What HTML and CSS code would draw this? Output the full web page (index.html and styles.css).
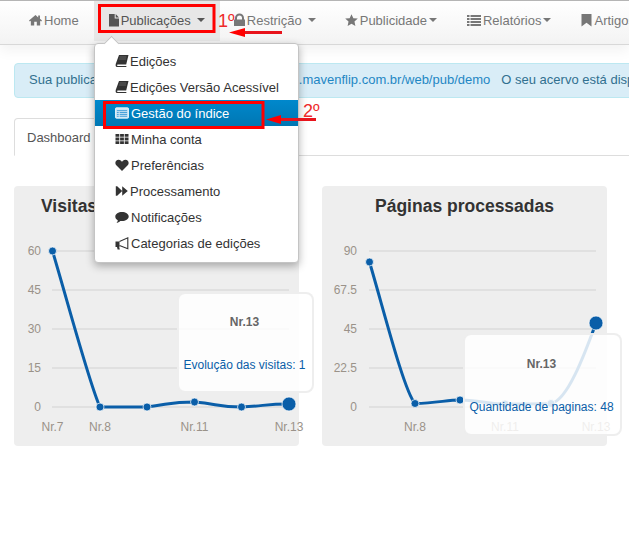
FILE: index.html
```html
<!DOCTYPE html>
<html lang="pt">
<head>
<meta charset="utf-8">
<title>Dashboard</title>
<link rel="stylesheet" href="styles.css">
</head>
<body>
<svg class="defs" width="0" height="0" aria-hidden="true">
  <defs>
    <symbol id="i-home" viewBox="0 0 14 14"><path d="M7 1.500 0 7.600l.9 1L2 7.700V13h3.600V9h2.800v4H12V7.700l1.100.9.9-1-2.200-1.900V2.200h-1.900v2.100z"/></symbol>
    <symbol id="i-file" viewBox="0 0 10 14"><path d="M0 1h5.700v4.600H10V13.500H0zM6.700 1 10 4.600H6.700z"/></symbol>
    <symbol id="i-lock" viewBox="0 0 11 14"><path d="M0 6.500h1V5a4.500 4.500 0 0 1 9 0v1.500h1V13H0zM3 6.500h5V5a2.500 2.500 0 0 0-5 0z"/></symbol>
    <symbol id="i-star" viewBox="0 0 14 14"><path d="m7 .7 2 4.300 4.800.5-3.600 3.200 1 4.700L7 11l-4.200 2.400 1-4.700L.2 5.500 5 5z"/></symbol>
    <symbol id="i-list" viewBox="0 0 14 14"><path d="M0 2h2.500v2H0zM3.500 2H14v2H3.500zM0 5h2.500v2H0zM3.500 5H14v2H3.500zM0 8h2.500v2H0zM3.500 8H14v2H3.500zM0 11h2.500v2H0zM3.500 11H14v2H3.500z"/></symbol>
    <symbol id="i-mark" viewBox="0 0 11 14"><path d="M.5 1h10v12.500L5.500 9.800l-5 3.700z"/></symbol>
    <symbol id="i-book" viewBox="0 0 14 14"><path d="M4 1h9.500l-2.300 9.500H2.700C2 10.500 2 11.900 2.600 11.900h8.900l-.3 1.100H2C.6 13 .4 11.400.8 9.800z"/><path d="M4.600 3h6.700M4.200 5h6.700" stroke="#888" stroke-width=".6" fill="none"/></symbol>
    <symbol id="i-table" viewBox="0 0 15 14"><rect x=".5" y="1.500" width="14" height="11" rx="1" fill="#cfe6f5" stroke="#eaf5fc"/><path d="M2 4.500h11M5 6.500h8M5 8.500h8M5 10.500h8M2 6.500h2M2 8.500h2M2 10.500h2" stroke="#3a9ad6"/></symbol>
    <symbol id="i-grid" viewBox="0 0 14 14"><path d="M.5 2h3.800v2.800H.5zM5.100 2h3.800v2.800H5.100zM9.700 2h3.800v2.800H9.700zM.5 5.600h3.800v2.800H.5zM5.100 5.600h3.800v2.800H5.100zM9.700 5.600h3.800v2.800H9.700zM.5 9.200h3.800V12H.5zM5.100 9.200h3.800V12H5.100zM9.700 9.200h3.800V12H9.700z"/></symbol>
    <symbol id="i-heart" viewBox="0 0 14 14"><path d="M7 13 1.300 7.300C-.6 5.300.5 1.800 3.600 1.800 5.300 1.800 6.400 2.800 7 4c.6-1.200 1.700-2.200 3.400-2.200 3.100 0 4.200 3.500 2.300 5.500z"/></symbol>
    <symbol id="i-forward" viewBox="0 0 14 14"><path d="M.8 2.200h1.400v9.600H.8zM2.200 2.200 7.200 7l-5 4.800zM7.200 2.200 12.800 7l-5.600 4.800z"/></symbol>
    <symbol id="i-comment" viewBox="0 0 14 14"><path d="M7 2c3.600 0 6.700 1.800 6.700 4.500S10.600 11 7 11c-.6 0-1.200 0-1.700-.1-1 1-2.400 1.900-3.900 2 .8-.7 1.300-1.500 1.400-2.700C1.200 9.500.3 8.100.3 6.500.3 3.800 3.400 2 7 2z"/></symbol>
    <symbol id="i-bullhorn" viewBox="0 0 14 14"><path d="M.5 5.500h4V11H.5zM2 11h2.200l.6 2.500H2.600z"/><path d="M4.500 5.500 12.800 1.800v11L4.500 9.500" fill="none" stroke="currentColor" stroke-width="1.100"/></symbol>
  </defs>
</svg>

<header class="navbar">
  <nav class="nav">
    <a class="nav-item"><svg class="icon icon-13"><use href="#i-home"/></svg>Home</a>
    <a class="nav-item is-open"><svg class="icon icon-10"><use href="#i-file"/></svg>Publicações<span class="caret caret-wide"></span></a>
    <a class="nav-item nav-item-tight"><svg class="icon icon-11"><use href="#i-lock"/></svg>Restrição<span class="caret caret-wide"></span></a>
    <a class="nav-item"><svg class="icon icon-13"><use href="#i-star"/></svg>Publicidade<span class="caret"></span></a>
    <a class="nav-item"><svg class="icon"><use href="#i-list"/></svg>Relatórios<span class="caret"></span></a>
    <a class="nav-item"><svg class="icon icon-11"><use href="#i-mark"/></svg>Artigos</a>
  </nav>
</header>

<ul class="menu">
  <li class="menu-item menu-item-tight"><svg class="icon"><use href="#i-book"/></svg>Edições</li>
  <li class="menu-item menu-item-tight"><svg class="icon"><use href="#i-book"/></svg>Edições Versão Acessível</li>
  <li class="menu-item is-active"><svg class="icon"><use href="#i-table"/></svg>Gestão do índice</li>
  <li class="menu-item"><svg class="icon"><use href="#i-grid"/></svg>Minha conta</li>
  <li class="menu-item"><svg class="icon"><use href="#i-heart"/></svg>Preferências</li>
  <li class="menu-item menu-item-tight"><svg class="icon"><use href="#i-forward"/></svg>Processamento</li>
  <li class="menu-item"><svg class="icon"><use href="#i-comment"/></svg>Notificações</li>
  <li class="menu-item"><svg class="icon"><use href="#i-bullhorn"/></svg>Categorias de edições</li>
</ul>

<main class="content">
  <div class="alert">Sua publicação está disponível em: http://www<a class="alert-link">.mavenflip.com.br/web/pub/demo</a><span class="alert-tail">O seu acervo está disponível</span></div>

  <div class="tabs"><div class="tab">Dashboard</div></div>

  <section class="cards">
    <article class="card">
      <h2 class="card-title card-title-left">Visitas</h2>
      <div class="chart">
        <svg class="plot" viewBox="0 0 285 260" width="285" height="260">
          <g class="grid">
            <path d="M38 65H275M38 104H275M38 143H275M38 182H275M38 221H275"/>
          </g>
          <g class="axis-y">
            <text x="27" y="69">60</text><text x="27" y="108">45</text><text x="27" y="147">30</text><text x="27" y="186">15</text><text x="27" y="225">0</text>
          </g>
          <g class="axis-x">
            <text x="38.500" y="245">Nr.7</text><text x="86" y="245">Nr.8</text><text x="180.500" y="245">Nr.11</text><text x="275" y="245">Nr.13</text>
          </g>
          <path class="line" d="M38.500 65C54 117 76 200 86 221C110 221 110 221 133 221C157 218 157 216 180.500 216C204 218 204 221 227.500 221C251 220 251 218 275 218"/>
          <g class="dots">
            <circle cx="38.500" cy="65" r="4"/><circle cx="86" cy="221" r="4"/><circle cx="133" cy="221" r="4"/><circle cx="180.500" cy="216" r="4"/><circle cx="227.500" cy="221" r="4"/><circle cx="275" cy="218" r="7"/>
          </g>
        </svg>
        <div class="tooltip tooltip-visits">
          <div class="tooltip-title">Nr.13</div>
          <div class="tooltip-value">Evolução das visitas: 1</div>
        </div>
      </div>
    </article>

    <article class="card">
      <h2 class="card-title">Páginas processadas</h2>
      <div class="chart">
        <svg class="plot" viewBox="0 0 285 260" width="285" height="260">
          <g class="grid">
            <path d="M47 65H274M47 104H274M47 143H274M47 182H274M47 221H274"/>
          </g>
          <g class="axis-y">
            <text x="35" y="69">90</text><text x="35" y="108">67.5</text><text x="35" y="147">45</text><text x="35" y="186">22.5</text><text x="35" y="225">0</text>
          </g>
          <g class="axis-x">
            <text x="93" y="245">Nr.8</text><text x="183" y="245">Nr.11</text><text x="274" y="245">Nr.13</text>
          </g>
          <path class="line" d="M47.500 76C62 125 82 205 93 217.500C115 217 125 214 138 214C160 215 170 218 183 218C205 218 215 218 229 217.500C245 215 262 170 274 137"/>
          <g class="dots">
            <circle cx="47.500" cy="76" r="4"/><circle cx="93" cy="217.500" r="4"/><circle cx="138" cy="214" r="4"/><circle cx="183" cy="218" r="4"/><circle cx="229" cy="217.500" r="4"/><circle cx="274" cy="137" r="7"/>
          </g>
        </svg>
        <div class="tooltip tooltip-pages">
          <div class="tooltip-title">Nr.13</div>
          <div class="tooltip-value">Quantidade de paginas: 48</div>
        </div>
      </div>
    </article>
  </section>
</main>

<svg class="marks" width="629" height="544" viewBox="0 0 629 544" aria-hidden="true">
  <rect class="mark-box" x="99.500" y="5.500" width="114.500" height="26"/>
  <rect class="mark-box" x="104.500" y="102.500" width="158.500" height="25"/>
  <path class="mark-line" d="M282 32.500H240M316 119.500H276"/>
  <path class="mark-head" d="M229 32.500 245 28V37zM266 119.500 281 115V124z"/>
  <text class="mark-text" x="218" y="27">1º</text>
  <text class="mark-text" x="303" y="117">2º</text>
</svg>
</body>
</html>
```

FILE: styles.css
```css
* { box-sizing: border-box; }

html, body {
  margin: 0;
  height: 544px;
  overflow: hidden;
  background: #fff;
  font-family: "Liberation Sans", Arial, sans-serif;
  font-size: 13px;
  color: #333;
}

.defs { position: absolute; }

.icon {
  width: 14px;
  height: 14px;
  fill: currentColor;
  flex: none;
}

.icon-13 { width: 13px; }
.icon-11 { width: 11px; }
.icon-10 { width: 10px; }

/* Navbar */
.navbar {
  height: 45px;
  border-top: 1px solid #b5b5b5;
  border-bottom: 1px solid #d8d8d8;
  background: linear-gradient(#ffffff, #f3f3f3);
  box-shadow: 0 6px 12px rgba(0, 0, 0, .05);
  overflow: hidden;
}

.nav {
  display: flex;
  padding-left: 14px;
  width: 760px;
}

.nav-item {
  display: flex;
  align-items: center;
  gap: 2px;
  height: 40px;
  padding: 0 15px 2px;
  color: #777;
  white-space: nowrap;
}

.nav-item-tight { padding-left: 14px; padding-right: 14px; }

.nav-item.is-open { background: #e7e7e7; color: #555; }

.caret {
  width: 0;
  height: 0;
  border-top: 4px solid currentColor;
  border-left: 4px solid transparent;
  border-right: 4px solid transparent;
}

.caret-wide { margin-left: 4px; }

/* Dropdown */
.menu {
  position: absolute;
  left: 94px;
  top: 43px;
  z-index: 5;
  width: 205px;
  height: 220px;
  margin: 0;
  padding: 4px 0;
  list-style: none;
  background: #fff;
  border: 1px solid #c4c4c4;
  border-radius: 4px;
  box-shadow: 0 3px 8px rgba(0, 0, 0, .3);
}

.menu::before {
  content: "";
  position: absolute;
  left: 11px;
  top: -6px;
  width: 10px;
  height: 10px;
  background: #fff;
  border-left: 1px solid #c4c4c4;
  border-top: 1px solid #c4c4c4;
  transform: rotate(45deg);
}

.menu-item {
  position: relative;
  display: flex;
  align-items: center;
  gap: 2px;
  height: 26px;
  padding-left: 20px;
  color: #333;
  white-space: nowrap;
}

.menu-item-tight { gap: 1px; }

.menu-item.is-active {
  background: linear-gradient(#0088cc, #0077b3);
  color: #fff;
}

/* Content */
.content { padding: 18px 0 0 14px; }

.alert {
  height: 35px;
  line-height: 31px;
  width: 640px;
  padding-left: 14px;
  background: #d9edf7;
  border: 1px solid #bce8f1;
  border-radius: 4px;
  color: #31708f;
  white-space: nowrap;
  overflow: hidden;
}

.alert-link { margin-left: 1px; color: #1f87c4; }
.alert-tail { margin-left: 11px; }

.tabs {
  margin-top: 20px;
  height: 38px;
  border-bottom: 1px solid #ddd;
}

.tab {
  width: 90px;
  height: 38px;
  line-height: 37px;
  padding-left: 12px;
  background: #fff;
  border: 1px solid #ddd;
  border-bottom-color: #fff;
  border-radius: 4px 4px 0 0;
  color: #555;
}

.cards {
  display: flex;
  gap: 23px;
  margin-top: 30px;
}

.card {
  position: relative;
  width: 285px;
  height: 260px;
  border-radius: 4px;
  background: #eee;
}

.card-title {
  position: absolute;
  left: 0;
  right: 0;
  top: 9px;
  margin: 0;
  text-align: center;
  font-size: 17.500px;
  line-height: 22px;
  font-weight: 700;
  color: #333;
}

.card-title-left { text-align: left; padding-left: 27px; }

.chart { position: relative; width: 285px; height: 260px; }

.plot { display: block; overflow: visible; }

.grid path { fill: none; stroke: #e0e0e0; stroke-width: 2; }

.axis-y text, .axis-x text {
  font-size: 12px;
  fill: #9a9289;
}

.axis-y text { text-anchor: end; }
.axis-x text { text-anchor: middle; }

.line { fill: none; stroke: #0a5ea8; stroke-width: 3; stroke-linecap: round; }
.dots circle { fill: #0a5ea8; stroke: #fff; stroke-width: 1; stroke-opacity: .7; }

.tooltip {
  position: absolute;
  text-align: center;
  font-size: 12px;
  white-space: nowrap;
  background: rgba(255, 255, 255, .84);
  border: 2px solid rgba(235, 235, 235, .85);
  border-radius: 8px;
}

.tooltip-visits { left: 163px; top: 106px; width: 137px; height: 101px; padding: 20px 2px 0 0; }
.tooltip-pages { left: 141px; top: 147px; width: 159px; height: 103px; padding: 21px 2px 0 0; }

.tooltip-title { font-weight: 700; color: #666; line-height: 16px; }
.tooltip-value { margin-top: 27px; color: #0a5ea8; line-height: 16px; }

/* Hand-drawn annotations over the screenshot */
.marks { position: absolute; left: 0; top: 0; z-index: 10; pointer-events: none; }
.mark-box { fill: none; stroke: #f00; stroke-width: 3; }
.mark-line { fill: none; stroke: #e8141c; stroke-width: 3; }
.mark-head { fill: #f00; }
.mark-text { font-family: "Liberation Sans", sans-serif; font-size: 18px; fill: #ee2a2a; }
```
